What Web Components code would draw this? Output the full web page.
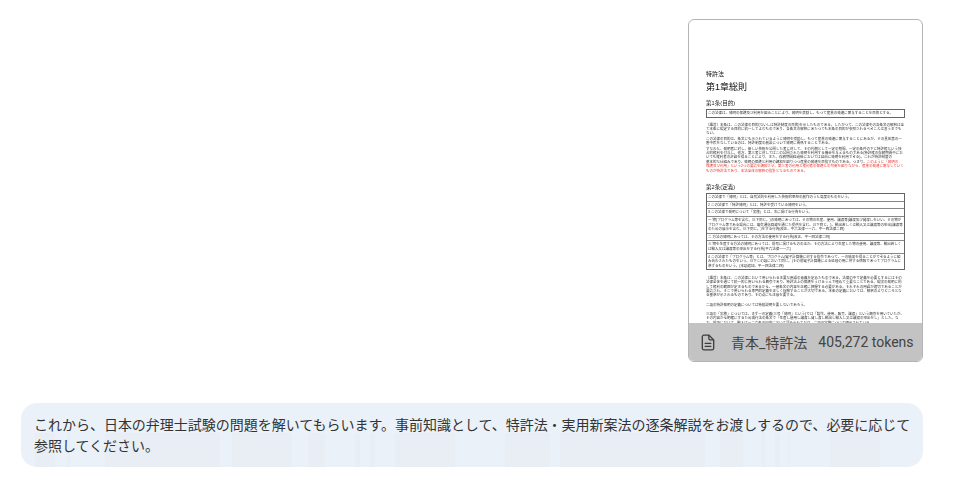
<!DOCTYPE html>
<html lang="ja">
<head>
<meta charset="utf-8">
<title>青本_特許法</title>
<style>
  html, body { margin:0; background:#fff; }
  body { font-family:Roboto,"Noto Sans CJK JP",sans-serif; color:#333; }
  .red { color:#e8352e; }
</style>
</head>
<body>
<chat-turn>
  <doc-card slot="attachment" name="青本_特許法" tokens="405,272 tokens">
    <doc-title>特許法</doc-title>
    <doc-chapter>第1章総則</doc-chapter>
    <doc-heading>第1条(目的)</doc-heading>
    <doc-table>
      <doc-row>この法律は、発明の保護及び利用を図ることにより、発明を奨励し、もつて産業の発達に寄与することを目的とする。</doc-row>
    </doc-table>
    <doc-para gap="5">〔趣旨〕本条は、この法律の目的(ないしは特許制度の目的)を示したものである。したがつて、この法律中の各条文の解釈は全て本条に規定する目的に統一してよむものであり、各条文の解釈にあたつても本条の目的が参照されるべきことは言うまでもない。</doc-para>
    <doc-para gap="1">この法律の目的は、条文にも示されているように発明を奨励し、もつて産業の発達に寄与することにあるが、その具体策の一番中核をなしているのは、特許制度の創設について発明に関係することである。</doc-para>
    <doc-para gap="1">すなわち、発明者に対し、新しい技術を公開した者に対して、その代償として一定の期間、一定の条件の下に特許権という独占的権利を付与し、他方、第三者に対してはこの公開された発明を利用する機会を与えるものである(特許権の存続期間中においても権利者の許諾を得ることにより、また、存続期間経過後においては自由に発明を利用できる)。これが特許制度の</doc-para>
    <doc-para gap="0" nowrap><span>基本的な仕組みであり、発明の保護と利用の調和を図りつつ産業の発達を目指すものである。つまり、</span><span class="red">このように「発明の</span></doc-para>
    <doc-para gap="0" class="red">保護及び利用」という2つの要請を調和させ、第三者の利用と権利者の保護との均衡を図りながら、産業の発達に寄与していくものが特許法であり、本法全体の解釈の指針となるものである。</doc-para>
    <doc-heading wide>第2条(定義)</doc-heading>
    <doc-table>
      <doc-row>この法律で「発明」とは、自然法則を利用した技術的思想の創作のうち高度のものをいう。</doc-row>
      <doc-row>2 この法律で「特許発明」とは、特許を受けている発明をいう。</doc-row>
      <doc-row>3 この法律で発明について「実施」とは、次に掲げる行為をいう。</doc-row>
      <doc-row>一 物(プログラム等を含む。以下同じ。)の発明にあつては、その物の生産、使用、譲渡等(譲渡及び貸渡しをいい、その物がプログラム等である場合には、電気通信回線を通じた提供を含む。以下同じ。)、輸出若しくは輸入又は譲渡等の申出(譲渡等のための展示を含む。以下同じ。)をする行為(改正、平六法律一一六、平一四法律二四)</doc-row>
      <doc-row>二 方法の発明にあつては、その方法の使用をする行為(改正、平一四法律二四)</doc-row>
      <doc-row>三 物を生産する方法の発明にあつては、前号に掲げるもののほか、その方法により生産した物の使用、譲渡等、輸出若しくは輸入又は譲渡等の申出をする行為(平六法律一一六)</doc-row>
      <doc-row>4 この法律で「プログラム等」とは、プログラム(電子計算機に対する指令であつて、一の結果を得ることができるように組み合わされたものをいう。以下この項において同じ。)その他電子計算機による処理の用に供する情報であつてプログラムに準ずるものをいう。(本項追加、平一四法律二四)</doc-row>
    </doc-table>
    <doc-para gap="6">〔趣旨〕本条は、この法律において用いられる主要な用語の意義を定めたものである。法律の中で定義を必要とするにはその法律全体を通じて統一的に用いられる概念であり、特許法上の保護をうけるうえで極めて重要なことである。現実の発明に則して権利の範囲が定まるものであるから、一層条文の内容を正確に把握する必要がある。それぞれの用語が適切であることが要請され、そこで用いられる専門的定義を正しく理解することが大切である。本条の定義においては、解釈のよりどころとなる基準が示されるものであり、その点にも注意を要する。</doc-para>
    <doc-para gap="5">二項の特許発明の定義については特段説明を要しないであろう。</doc-para>
    <doc-para gap="5">三項の「実施」については、まず一の定義(三号「発明」という)では「製作、使用、販売、譲渡」という概念を用いていたが、その内容から明確にするため現行法の条文で「生産し使用し譲渡し貸し渡し輸出し輸入し又は譲渡の申出をし」とした。なお、前項において、輸入は一二六条の国内において認められており、二項の実施について明示されている。</doc-para>
  </doc-card>
  <chat-bubble>これから、日本の弁理士試験の問題を解いてもらいます。事前知識として、特許法・実用新案法の逐条解説をお渡しするので、必要に応じて参照してください。</chat-bubble>
</chat-turn>

<script>
function shadow(el, html) {
  el.attachShadow({mode:'open'}).innerHTML = html;
}

class ChatTurn extends HTMLElement {
  constructor() {
    super();
    shadow(this, `
      <style>
        :host { display:flex; flex-direction:column; padding:19px 42px 14px 21px; }
        .att { display:flex; justify-content:flex-end; margin-bottom:41px; }
      </style>
      <div class="att"><slot name="attachment"></slot></div>
      <slot></slot>
    `);
  }
}

// darker strips along the bottom of the bubble, [from, to] in page x
const strips = [[35,55],[67,70],[105,220],[232,292],[308,325],[355,360],[370,375],[395,455],
  [505,550],[560,705],[720,743],[762,765],[775,780],[788,790],[830,880]];

class ChatBubble extends HTMLElement {
  constructor() {
    super();
    const light = '#eaf1f9', dark = '#e9eef5';
    const stops = [];
    for (const [a, b] of strips) {
      const l = a - 21, r = b - 21;
      stops.push(`${light} ${l}px`, `${dark} ${l}px`, `${dark} ${r}px`, `${light} ${r}px`);
    }
    shadow(this, `
      <style>
        :host {
          display:block; box-sizing:border-box; height:64px;
          padding:11px 4px 11px 13px; border-radius:16px;
          background:linear-gradient(90deg, ${stops.join(',')}) bottom / 100% 34px no-repeat, ${light};
          color:#333; letter-spacing:-.02px;
          font:14px/20.5px "Noto Sans CJK JP","Inter",sans-serif;
        }
      </style>
      <slot></slot>
    `);
  }
}

class DocCard extends HTMLElement {
  constructor() {
    super();
    shadow(this, `
      <style>
        :host {
          display:block; position:relative; box-sizing:border-box;
          width:235px; height:343px; overflow:hidden;
          border:1px solid #b4b4b4; border-radius:6px; background:#fff;
        }
        .page { padding:50px 17px 0; filter:blur(.3px); }
        .foot {
          position:absolute; left:0; right:0; bottom:0; height:38px;
          display:flex; align-items:center; padding-left:12px;
          background:#c3c3c3; color:#444;
          font:14px Roboto,"Noto Sans CJK JP",sans-serif; white-space:nowrap;
        }
        svg { width:14px; height:17px; margin-right:16px; flex:none; }
        .tok { margin-left:11px; }
      </style>
      <div class="page"><slot></slot></div>
      <div class="foot">
        <svg viewBox="0 0 15 18" fill="none" stroke="#3d3d3d" stroke-width="1.4" stroke-linejoin="round" stroke-linecap="round">
          <path d="M3 1.2h5.6l5 5v9a1.6 1.6 0 0 1-1.6 1.6H3a1.6 1.6 0 0 1-1.6-1.6V2.8A1.6 1.6 0 0 1 3 1.2z"/>
          <path d="M8.4 1.4v3.4a1.4 1.4 0 0 0 1.4 1.4h3.6"/>
          <path d="M4.5 10h6M4.5 13.2h6"/>
        </svg>
        <span class="name"></span><span class="tok"></span>
      </div>
    `);
    this.shadowRoot.querySelector('.name').textContent = this.getAttribute('name');
    this.shadowRoot.querySelector('.tok').textContent = this.getAttribute('tokens');
  }
}

// tiny blocks of the scanned page inside the preview
const tiny = `"Liberation Sans","Noto Sans CJK JP",sans-serif`;

class DocTitle extends HTMLElement {
  constructor() {
    super();
    shadow(this, `<style>:host{display:block;font:6px/8px ${tiny};color:#111;}</style><slot></slot>`);
  }
}

class DocChapter extends HTMLElement {
  constructor() {
    super();
    shadow(this, `<style>:host{display:block;font:9px/13px ${tiny};color:#111;margin-top:2.5px;}</style><slot></slot>`);
  }
}

class DocHeading extends HTMLElement {
  constructor() {
    super();
    shadow(this, `<style>
      :host{display:block;font:5.6px/7px ${tiny};color:#222;margin-top:6px;}
      :host([wide]){margin-top:10.5px;}
    </style><slot></slot>`);
  }
}

class DocTable extends HTMLElement {
  constructor() {
    super();
    shadow(this, `<style>:host{display:block;margin-top:2.7px;border:.7px solid #666;font:3.5px/4.6px ${tiny};color:#333;}</style><slot></slot>`);
  }
}

class DocRow extends HTMLElement {
  constructor() {
    super();
    shadow(this, `<style>
      :host{display:block;padding:1px 1px;border-bottom:.7px solid #888;}
      :host(:last-child){border-bottom:0;}
    </style><slot></slot>`);
  }
}

class DocPara extends HTMLElement {
  constructor() {
    super();
    shadow(this, `<style>
      :host{display:block;font:3.5px/4.4px ${tiny};color:#333;margin-top:1px;}
      :host([gap="0"]){margin-top:0;}
      :host([gap="5"]){margin-top:4.8px;}
      :host([gap="6"]){margin-top:5.5px;}
      :host([nowrap]){white-space:nowrap;}
      :host(.red){color:#e8352e;}
    </style><slot></slot>`);
  }
}

customElements.define('chat-turn', ChatTurn);
customElements.define('chat-bubble', ChatBubble);
customElements.define('doc-card', DocCard);
customElements.define('doc-title', DocTitle);
customElements.define('doc-chapter', DocChapter);
customElements.define('doc-heading', DocHeading);
customElements.define('doc-table', DocTable);
customElements.define('doc-row', DocRow);
customElements.define('doc-para', DocPara);
</script>
</body>
</html>
